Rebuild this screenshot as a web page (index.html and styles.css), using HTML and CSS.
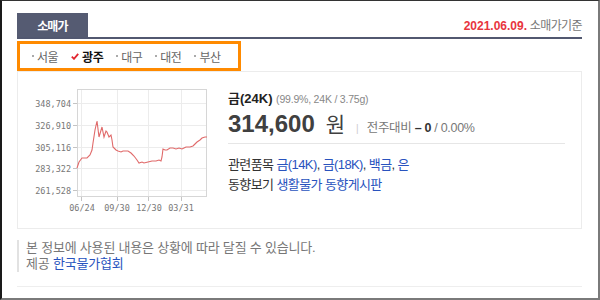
FILE: index.html
```html
<!DOCTYPE html>
<html lang="ko">
<head>
<meta charset="utf-8">
<title>소매가</title>
<link rel="stylesheet" href="styles.css">
</head>
<body>
<div class="frame">
  <div class="page">
    <div class="header">
      <div class="tab">소매가</div>
      <div class="date"><span class="red">2021.06.09.</span> 소매가기준</div>
    </div>
    <ul class="regions">
      <li class="dot">서울</li>
      <li class="on"><svg class="check" width="8" height="7" viewBox="0 0 8 7"><path d="M0.8 3.6 L3 5.8 L7.2 0.8" fill="none" stroke="#e2262f" stroke-width="1.8"/></svg>광주</li>
      <li class="dot">대구</li>
      <li class="dot">대전</li>
      <li class="dot">부산</li>
    </ul>
    <div class="box">
      <svg class="chart" width="185" height="135" viewBox="27 80 185 135">
        <g stroke="#ececec" stroke-width="1">
          <line x1="77" y1="103.5" x2="207" y2="103.5"/>
          <line x1="77" y1="125.5" x2="207" y2="125.5"/>
          <line x1="77" y1="147.5" x2="207" y2="147.5"/>
          <line x1="77" y1="168.5" x2="207" y2="168.5"/>
          <line x1="77" y1="190.5" x2="207" y2="190.5"/>
          <line x1="81.5" y1="89" x2="81.5" y2="197"/>
          <line x1="117.5" y1="89" x2="117.5" y2="197"/>
          <line x1="148.5" y1="89" x2="148.5" y2="197"/>
          <line x1="181.5" y1="89" x2="181.5" y2="197"/>
        </g>
        <rect x="77.5" y="89.5" width="129" height="107" fill="none" stroke="#d6d6d6"/>
        <g stroke="#c4c4c4">
          <line x1="73" y1="103.5" x2="77" y2="103.5"/>
          <line x1="73" y1="125.5" x2="77" y2="125.5"/>
          <line x1="73" y1="147.5" x2="77" y2="147.5"/>
          <line x1="73" y1="168.5" x2="77" y2="168.5"/>
          <line x1="73" y1="190.5" x2="77" y2="190.5"/>
          <line x1="81.5" y1="197" x2="81.5" y2="201"/>
          <line x1="117.5" y1="197" x2="117.5" y2="201"/>
          <line x1="148.5" y1="197" x2="148.5" y2="201"/>
          <line x1="181.5" y1="197" x2="181.5" y2="201"/>
        </g>
        <g class="ylab" text-anchor="end">
          <text x="71" y="106.5">348,704</text>
          <text x="71" y="128.5">326,910</text>
          <text x="71" y="150.5">305,116</text>
          <text x="71" y="171.5">283,322</text>
          <text x="71" y="193.5">261,528</text>
        </g>
        <g class="xlab" text-anchor="middle">
          <text x="82" y="211">06/24</text>
          <text x="117" y="211">09/30</text>
          <text x="149" y="211">12/30</text>
          <text x="181" y="211">03/31</text>
        </g>
        <path d="M77,168 L79,162 L82,158 L87,158 L90,155 L92,150 L93,143 L95,130 L97,121 L99,137 L102,127 L104,137 L106,131 L107,132 L109,137 L111,135 L112,140 L113,147 L116,150 L118,151 L121,152 L123,151 L128,151 L131,153 L134,156 L137,160 L139,163 L142,162 L144,163 L148,162 L152,161 L156,161 L159,160 L161,161 L162,157 L163,149 L165,150 L167,150 L170,148 L173,148 L176,149 L179,148 L182,149 L184,148 L186,147 L190,147 L193,146 L195,144 L197,142 L200,140 L202,138 L205,137 L207,137" fill="none" stroke="#e06a6a" stroke-width="1.1"/>
      </svg>
      <div class="info">
        <div class="title"><b>금(24K)</b> <span class="spec">(99.9%, 24K / 3.75g)</span></div>
        <div class="priceline">
          <span class="price">314,600</span><span class="won">원</span>
          <span class="sep">|</span>
          <span class="cmp">전주대비 <b>–</b> <b>0</b> / 0.00%</span>
        </div>
        <div class="rel">
          <div class="row"><span class="label">관련품목</span> <a class="link">금(14K)</a>, <a class="link">금(18K)</a>, <a class="link">백금</a>, <a class="link">은</a></div>
          <div class="row"><span class="label">동향보기</span> <a class="link">생활물가 동향게시판</a></div>
        </div>
      </div>
    </div>
    <div class="note">
      <p>본 정보에 사용된 내용은 상황에 따라 달질 수 있습니다.</p>
      <p>제공 <a class="link">한국물가협회</a></p>
    </div>
    <div class="bottomline"></div>
  </div>
</div>
</body>
</html>
```

FILE: styles.css
```css
html, body {
  margin: 0;
  padding: 0;
  background: #fff;
}
body {
  font-family: "Liberation Sans", "Noto Sans CJK KR", sans-serif;
  color: #333;
}
.frame {
  width: 600px;
  height: 300px;
  box-sizing: border-box;
  border-left: 2px solid #1a1a1a;
  border-top: 1px solid #333;
  border-right: 2px solid #7a7a7a;
  border-bottom: 2px solid #7a7a7a;
  overflow: hidden;
}
.page {
  padding: 12px 16px 0 15px;
}
.header {
  display: flex;
  justify-content: space-between;
  align-items: flex-end;
  border-bottom: 2px solid #525870;
}
.tab {
  width: 71px;
  height: 24px;
  background: #555b72;
  color: #fff;
  font-weight: bold;
  font-size: 12px;
  letter-spacing: -0.8px;
  display: flex;
  align-items: center;
  justify-content: center;
}
.date {
  font-size: 12px;
  color: #777;
  padding-bottom: 4px;
  letter-spacing: -0.6px;
}
.date .red {
  color: #e8353e;
  font-weight: bold;
  letter-spacing: 0;
}
.regions {
  list-style: none;
  margin: 2px 0 0 0;
  padding: 0 0 0 12px;
  width: 224px;
  height: 30px;
  box-sizing: border-box;
  border: 3px solid #ff8a00;
  display: flex;
  align-items: center;
  gap: 13px;
  font-size: 12px;
  color: #666;
  letter-spacing: -0.5px;
}
.regions li {
  display: flex;
  align-items: center;
}
.regions li.dot::before {
  content: "";
  width: 2px;
  height: 2px;
  background: #aaa;
  margin-right: 3px;
}
.regions li.on {
  color: #111;
  font-weight: bold;
}
.check {
  margin-right: 3px;
}
.box {
  display: flex;
  border: 1px solid #ececec;
  height: 158px;
  box-sizing: border-box;
  padding: 8px 16px 0 9px;
  gap: 16px;
}
.chart {
  display: block;
  flex: none;
}
.ylab text, .xlab text {
  font-family: "DejaVu Sans Mono", monospace;
  font-size: 8.5px;
  fill: #777;
}
.info {
  flex: 1;
  padding-top: 10px;
}
.title {
  font-size: 13px;
  line-height: 18px;
  color: #222;
}
.title b {
  font-weight: bold;
}
.spec {
  font-size: 10.5px;
  color: #888;
  letter-spacing: -0.2px;
}
.priceline {
  height: 28px;
  display: flex;
  align-items: baseline;
  border-bottom: 1px solid #e6e6e6;
  padding-bottom: 7px;
}
.price {
  font-size: 24px;
  line-height: 28px;
  font-weight: bold;
  color: #404040;
}
.won {
  font-size: 21px;
  color: #404040;
  margin-left: 11px;
  font-family: "Noto Sans CJK KR", sans-serif;
}
.sep {
  font-size: 10px;
  color: #ccc;
  margin: 0 8px 0 11px;
}
.cmp {
  font-size: 12.5px;
  color: #777;
  letter-spacing: -0.3px;
}
.cmp b {
  color: #333;
  font-weight: bold;
}
.rel {
  padding-top: 11px;
}
.row {
  font-size: 13px;
  line-height: 20px;
  color: #333;
  letter-spacing: -0.6px;
}
.link {
  color: #2953be;
  text-decoration: none;
}
.note {
  margin-top: 11px;
  border-left: 2px solid #e2e2e2;
  padding-left: 7px;
  font-size: 13px;
  line-height: 16px;
  color: #777;
  letter-spacing: -0.2px;
}
.note p {
  margin: 0;
}
.bottomline {
  margin-top: 14px;
  border-top: 1px solid #eee;
}
```
